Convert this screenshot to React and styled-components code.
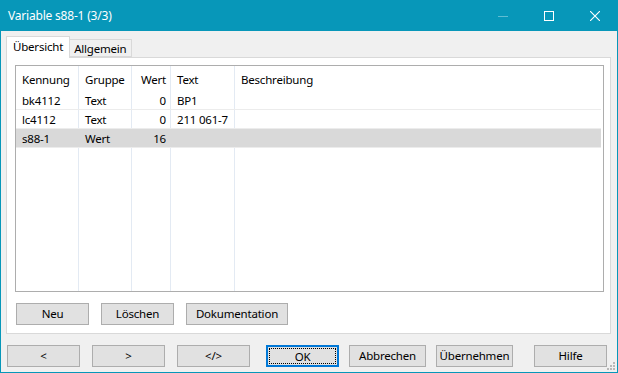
import React from "react";
import styled, { createGlobalStyle } from "styled-components";

const GlobalStyle = createGlobalStyle`
  html, body {
    margin: 0;
    padding: 0;
    background: #ffffff;
  }
  * {
    box-sizing: border-box;
  }
  body {
    font-family: "Noto Sans", "Open Sans", "Liberation Sans", sans-serif;
    font-size: 11.5px;
    letter-spacing: -0.2px;
    color: #000;
  }
`;

const accent = "#0797b9";

const rows = [
  { id: "bk4112", group: "Text", value: "0", text: "BP1", desc: "" },
  { id: "lc4112", group: "Text", value: "0", text: "211 061-7", desc: "" },
  { id: "s88-1", group: "Wert", value: "16", text: "", desc: "", selected: true },
];

const columns = [
  { key: "id", title: "Kennung", width: 63 },
  { key: "group", title: "Gruppe", width: 53 },
  { key: "value", title: "Wert", width: 39, right: true },
  { key: "text", title: "Text", width: 64 },
  { key: "desc", title: "Beschreibung", width: 0 },
];

const App = () => {
  return (
    <>
      <GlobalStyle />
      <Window>
        <TitleBar>
          <Title>Variable s88-1 (3/3)</Title>
          <Controls>
            <CaptionButton>
              <svg width="10" height="10" viewBox="0 0 10 10">
                <line x1="0" y1="5.5" x2="10" y2="5.5" stroke="#5fbdd3" strokeWidth="1" />
              </svg>
            </CaptionButton>
            <CaptionButton>
              <svg width="10" height="10" viewBox="0 0 10 10">
                <rect x="0.5" y="0.5" width="9" height="9" fill="none" stroke="#fff" strokeWidth="1" />
              </svg>
            </CaptionButton>
            <CaptionButton>
              <svg width="10" height="10" viewBox="0 0 10 10">
                <path d="M0 0 L10 10 M10 0 L0 10" stroke="#fff" strokeWidth="1.1" />
              </svg>
            </CaptionButton>
          </Controls>
        </TitleBar>

        <Body>
          <Tabs>
            <Tab $active>Übersicht</Tab>
            <Tab>Allgemein</Tab>
          </Tabs>
          <Panel>
            <List>
              <Columns>
                {columns.map((c) => (
                  <ColumnLine key={c.key} $w={c.width} />
                ))}
              </Columns>
              <Row $header>
                {columns.map((c) => (
                  <Cell key={c.key} $w={c.width} $right={c.right}>
                    {c.title}
                  </Cell>
                ))}
              </Row>
              {rows.map((r) => (
                <Row key={r.id} $selected={r.selected}>
                  {columns.map((c) => (
                    <Cell key={c.key} $w={c.width} $right={c.right}>
                      {r[c.key]}
                    </Cell>
                  ))}
                </Row>
              ))}
            </List>
            <ButtonRow>
              <Button $w={73}>Neu</Button>
              <Button $w={73}>Löschen</Button>
              <Button $w={102}>Dokumentation</Button>
            </ButtonRow>
          </Panel>

          <Footer>
            <Button $w={73}>&lt;</Button>
            <Button $w={73} $ml={12}>&gt;</Button>
            <Button $w={73} $ml={12}>&lt;/&gt;</Button>
            <Button $w={73} $ml={16} $default>
              <Focus>OK</Focus>
            </Button>
            <Button $w={77} $ml={10}>Abbrechen</Button>
            <Button $w={77} $ml={10}>Übernehmen</Button>
            <Button $w={73} $ml={21}>Hilfe</Button>
          </Footer>
        </Body>

        <Grip>
          <svg width="10" height="10" viewBox="0 0 10 10">
            <rect x="7" y="1" width="2" height="2" fill="#b8b8b8" />
            <rect x="4" y="4" width="2" height="2" fill="#b8b8b8" />
            <rect x="7" y="4" width="2" height="2" fill="#b8b8b8" />
            <rect x="1" y="7" width="2" height="2" fill="#b8b8b8" />
            <rect x="4" y="7" width="2" height="2" fill="#b8b8b8" />
            <rect x="7" y="7" width="2" height="2" fill="#b8b8b8" />
          </svg>
        </Grip>
      </Window>
    </>
  );
};

export default App;

const Window = styled.div`
  position: relative;
  width: 618px;
  height: 373px;
  border: 1px solid ${accent};
  border-top: none;
  background: #f0f0f0;
  display: flex;
  flex-direction: column;
`;

const TitleBar = styled.div`
  height: 31px;
  flex: none;
  background: ${accent};
  display: flex;
  align-items: center;
  padding-left: 7px;
`;

const Title = styled.div`
  color: #fff;
  font-size: 12px;
  flex: 1;
  padding-bottom: 1px;
`;

const Controls = styled.div`
  display: flex;
  height: 100%;
`;

const CaptionButton = styled.div`
  width: 46px;
  height: 100%;
  display: flex;
  align-items: center;
  justify-content: center;

  svg {
    display: block;
    margin-left: 1px;
  }
`;

const Body = styled.div`
  flex: 1;
  display: flex;
  flex-direction: column;
  padding: 5px 6px 0 5px;
`;

const Tabs = styled.div`
  display: flex;
  align-items: flex-end;
  height: 22px;
  position: relative;
  z-index: 1;
  margin-bottom: -1px;
`;

const Tab = styled.div`
  height: ${(p) => (p.$active ? "22px" : "18px")};
  padding: 0 ${(p) => (p.$active ? "6px" : "4px")};
  margin-bottom: ${(p) => (p.$active ? "0" : "1px")};
  display: flex;
  align-items: center;
  border: 1px solid #d9d9d9;
  border-bottom: ${(p) => (p.$active ? "none" : "1px solid #d9d9d9")};
  border-left: ${(p) => (p.$active ? "1px solid #d9d9d9" : "none")};
  background: ${(p) => (p.$active ? "#fff" : "#f0f0f0")};
  padding-bottom: ${(p) => (p.$active ? "2px" : "0")};
`;

const Panel = styled.div`
  height: 277px;
  flex: none;
  border: 1px solid #d9d9d9;
  background: #fff;
  display: flex;
  flex-direction: column;
  padding: 7px 6px 8px 8px;
`;

const List = styled.div`
  position: relative;
  flex: 1;
  border: 1px solid #adadad;
  padding: 0 2px 0 0;
  overflow: hidden;
`;

const Columns = styled.div`
  position: absolute;
  inset: 0 2px 0 0;
  display: flex;
  pointer-events: none;
`;

const ColumnLine = styled.div`
  width: ${(p) => (p.$w ? `${p.$w}px` : "auto")};
  flex: ${(p) => (p.$w ? "none" : "1")};
  border-right: ${(p) => (p.$w ? "1px solid #e3eaf3" : "none")};
`;

const Row = styled.div`
  position: relative;
  display: flex;
  align-items: center;
  height: ${(p) => (p.$header ? "25px" : "19px")};
  background: ${(p) => (p.$selected ? "#d9d9d9" : "transparent")};
  border-bottom: ${(p) => (p.$header ? "none" : "1px solid #ececec")};
  padding-top: ${(p) => (p.$header ? "1px" : "0")};
`;

const Cell = styled.div`
  width: ${(p) => (p.$w ? `${p.$w}px` : "auto")};
  flex: ${(p) => (p.$w ? "none" : "1")};
  padding: 0 5px 0 6px;
  text-align: ${(p) => (p.$right ? "right" : "left")};
  white-space: nowrap;
  overflow: hidden;
`;

const ButtonRow = styled.div`
  display: flex;
  gap: 12px;
  margin-top: 11px;
  padding-left: 1px;
`;

const Footer = styled.div`
  display: flex;
  margin-top: 11px;
  padding-left: 1px;
`;

const Button = styled.div`
  width: ${(p) => p.$w}px;
  height: 22px;
  margin-left: ${(p) => p.$ml || 0}px;
  display: flex;
  align-items: center;
  justify-content: center;
  background: #e1e1e1;
  border: ${(p) => (p.$default ? "2px solid #0078d7" : "1px solid #adadad")};
  padding: ${(p) => (p.$default ? "1px" : "0")};
  padding-bottom: 1px;
`;

const Focus = styled.span`
  flex: 1;
  align-self: stretch;
  display: flex;
  align-items: center;
  justify-content: center;
  outline: 1px dotted #000;
  outline-offset: -1px;
`;

const Grip = styled.div`
  position: absolute;
  right: 1px;
  bottom: 1px;
  width: 10px;
  height: 10px;

  svg {
    display: block;
  }
`;
